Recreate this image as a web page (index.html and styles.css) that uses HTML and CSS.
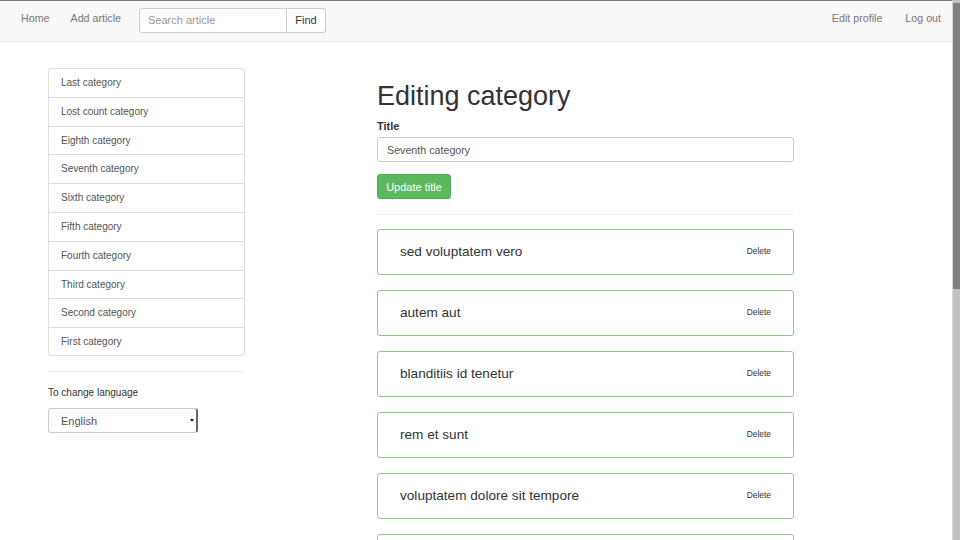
FILE: index.html
```html
<!DOCTYPE html>
<html>
<head>
<meta charset="utf-8">
<link rel="stylesheet" href="styles.css">
</head>
<body>
<div class="viewport">
<nav class="navbar">
  <a class="nav-link" href="#">Home</a>
  <a class="nav-link" href="#">Add article</a>
  <form class="search">
    <input class="search-input" type="text" placeholder="Search article">
    <button class="search-btn" type="button">Find</button>
  </form>
  <div class="nav-right">
    <a class="nav-link" href="#">Edit profile</a>
    <a class="nav-link" href="#">Log out</a>
  </div>
</nav>
<div class="page">
  <aside class="sidebar">
    <ul class="list">
      <li class="list-item">Last category</li>
      <li class="list-item">Lost count category</li>
      <li class="list-item">Eighth category</li>
      <li class="list-item">Seventh category</li>
      <li class="list-item">Sixth category</li>
      <li class="list-item">Fifth category</li>
      <li class="list-item">Fourth category</li>
      <li class="list-item">Third category</li>
      <li class="list-item">Second category</li>
      <li class="list-item">First category</li>
    </ul>
    <hr class="side-hr">
    <div class="lang-label">To change language</div>
    <div class="select-wrap">
      <select class="lang-select"><option>English</option></select>
    </div>
  </aside>
  <main class="main">
    <h1 class="title">Editing category</h1>
    <label class="field-label">Title</label>
    <input class="field-input" type="text" value="Seventh category">
    <button class="btn-success" type="button">Update title</button>
    <hr class="main-hr">
    <div class="cards">
      <div class="card"><span class="card-title">sed voluptatem vero</span><span class="card-del">Delete</span></div>
      <div class="card"><span class="card-title">autem aut</span><span class="card-del">Delete</span></div>
      <div class="card"><span class="card-title">blanditiis id tenetur</span><span class="card-del">Delete</span></div>
      <div class="card"><span class="card-title">rem et sunt</span><span class="card-del">Delete</span></div>
      <div class="card"><span class="card-title">voluptatem dolore sit tempore</span><span class="card-del">Delete</span></div>
      <div class="card"><span class="card-title">quia et modi</span><span class="card-del">Delete</span></div>
    </div>
  </main>
</div>
</div>
<div class="scrollbar"><div class="scroll-thumb"></div></div>
</body>
</html>
```
FILE: styles.css
```css
body {
  margin: 0;
  font-family: "Liberation Sans", Arial, sans-serif;
  color: #333;
  background: #fff;
  overflow: hidden;
  height: 540px;
}
.viewport {
  width: 952px;
}
.scrollbar {
  position: fixed;
  top: 0;
  right: 0;
  width: 8px;
  height: 540px;
  background: #c1c1c1;
  border-left: 1px solid #d8d8d8;
  box-sizing: border-box;
}
.scroll-thumb {
  margin-top: 3px;
  height: 286px;
  background: #7f7f7f;
}
.navbar {
  display: flex;
  align-items: center;
  height: 40px;
  background: #f8f8f8;
  border-top: 1px solid #7a7a7a;
  border-bottom: 1px solid #e7e7e7;
  padding: 0 11px 0 21px;
}
.nav-link {
  color: #777;
  text-decoration: none;
  font-size: 10.7px;
  margin-right: 21px;
  position: relative;
  top: -3px;
}
.nav-right {
  margin-left: auto;
  display: flex;
}
.nav-right .nav-link {
  margin-right: 23px;
}
.nav-right .nav-link:last-child {
  margin-right: 0;
}
.search {
  display: flex;
  margin: 0 0 0 -3px;
  position: relative;
  top: -1px;
}
.search-input {
  box-sizing: border-box;
  width: 148px;
  height: 25px;
  border: 1px solid #ccc;
  border-radius: 3px 0 0 3px;
  padding: 0 8px;
  font-family: inherit;
  font-size: 11px;
  color: #555;
  background: #fff;
  outline: none;
}
.search-input::placeholder {
  color: #999;
}
.search-btn {
  box-sizing: border-box;
  width: 39px;
  height: 25px;
  border: 1px solid #ccc;
  border-left: 0;
  border-radius: 0 3px 3px 0;
  background: #fff;
  font-family: inherit;
  font-size: 11px;
  color: #333;
  padding: 0;
}
.page {
  display: flex;
  padding-left: 48px;
  gap: 132px;
}
.sidebar {
  width: 197px;
  padding-top: 26px;
}
.list {
  list-style: none;
  margin: 0;
  padding: 0;
  border: 1px solid #ddd;
  border-radius: 3px;
}
.list-item {
  box-sizing: border-box;
  height: 28.8px;
  line-height: 27.8px;
  padding: 0 12px;
  font-size: 10px;
  color: #555;
  border-bottom: 1px solid #ddd;
}
.list-item:last-child {
  border-bottom: 0;
  height: 27px;
}
.side-hr {
  border: 0;
  border-top: 1px solid #eee;
  margin: 15px 0 0;
}
.lang-label {
  font-size: 10px;
  color: #333;
  margin-top: 14px;
  line-height: 14px;
}
.select-wrap {
  position: relative;
  width: 150px;
  margin-top: 8px;
}
.lang-select {
  appearance: none;
  -webkit-appearance: none;
  box-sizing: border-box;
  width: 150px;
  height: 25px;
  border: 1px solid #ccc;
  border-right: 2px solid #666;
  border-radius: 3px;
  background: #fff;
  padding: 0 12px;
  font-family: inherit;
  font-size: 11px;
  color: #555;
}
.select-wrap::after {
  content: "";
  position: absolute;
  right: 4px;
  top: 11px;
  border-left: 2px solid transparent;
  border-right: 2px solid transparent;
  border-top: 3px solid #222;
}
.main {
  width: 417px;
  display: flex;
  flex-direction: column;
  align-items: flex-start;
}
.title {
  font-size: 27px;
  font-weight: 400;
  line-height: 32px;
  margin: 38px 0 0;
  color: #333;
}
.field-label {
  font-size: 11px;
  font-weight: 700;
  line-height: 14px;
  margin-top: 7px;
}
.field-input {
  box-sizing: border-box;
  width: 417px;
  height: 25px;
  margin-top: 4px;
  border: 1px solid #ccc;
  border-radius: 3px;
  padding: 0 9px;
  font-family: inherit;
  font-size: 10.7px;
  color: #555;
}
.btn-success {
  box-sizing: border-box;
  margin-top: 12px;
  height: 25px;
  width: 74px;
  padding: 0;
  border: 1px solid #4cae4c;
  border-radius: 3px;
  background: #5cb85c;
  color: #fff;
  font-family: inherit;
  font-size: 11px;
}
.main-hr {
  align-self: stretch;
  border: 0;
  border-top: 1px solid #eee;
  margin: 15px 0 0;
}
.cards {
  align-self: stretch;
  margin-top: 14px;
  display: flex;
  flex-direction: column;
  gap: 15px;
}
.card {
  box-sizing: border-box;
  height: 46px;
  border: 1px solid #8ccc8c;
  border-radius: 3px;
  display: flex;
  align-items: center;
  justify-content: space-between;
  padding: 0 22px 2px;
}
.card-title {
  font-size: 13.6px;
  color: #333;
}
.card-del {
  font-size: 8.4px;
  color: #333;
}
```
